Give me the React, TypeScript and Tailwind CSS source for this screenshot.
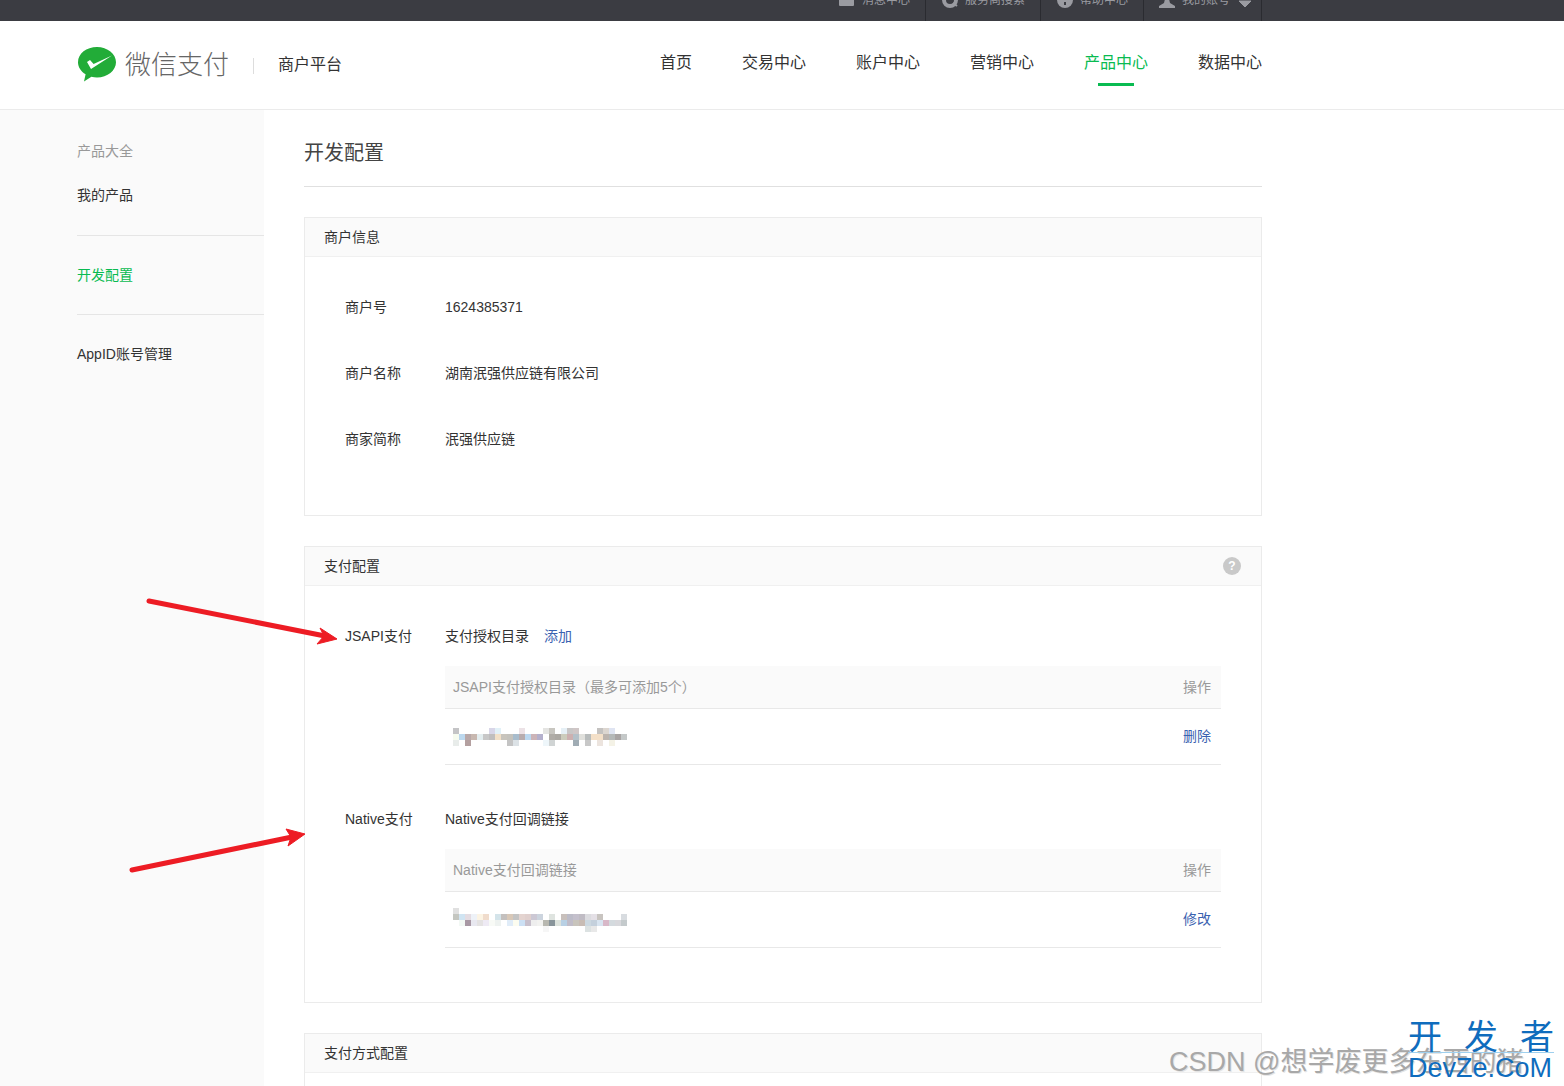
const FONT = '[font-family:"Liberation_Sans","Noto_Sans_CJK_SC",sans-serif]';

const NAV = ['首页', '交易中心', '账户中心', '营销中心', '产品中心', '数据中心'];

// 打码区域的色块，每块 6px
const MOSAIC_A = [
  ['#c4c4c6', '', '', '', '', '', '#d8d6e8', '#e2f1f8', '', '', '', '#ece2e6', '', '', '', '#e4e4e2', '#c8c6c0', '', '#e6f0f6', '#c8c6c6', '#cfc6c6', '', '', '', '#c4c2c0', '#dcd6d0', '#dfe4f2', ''],
  ['#f6fbef', '#bcd8ee', '#b8a8a8', '#c8b8b0', '#e4eef0', '#c8c8c8', '#c0bebe', '#f2e0c8', '#c8c4bc', '#c4c2bc', '#a8bccc', '#b8acae', '#bcd8f0', '#ccb4b8', '#b4b0cc', '', '#b0aca6', '#aca8a2', '#ccccbc', '#ccb0b0', '#b4c0c8', '#e0e0dc', '#b8bcbc', '#f4e0c8', '#f4e0c8', '#bcb4ae', '#b4b8b8', '#a8a4a4', '#c4c8c8'],
  ['#e8ecea', '', '#b4a0a0', '', '', '', '', '', '', '#c4c4c4', '#dce2e6', '', '', '', '', '#eef6fa', '#d0d4d4', '', '', '', '#a0acb4', '', '#c8c8c8', '', '#ece4de', '', '#f4f2e6', '', ''],
];

const MOSAIC_B = [
  ['#e0e0e0', '', '', '', '', '', '', '', '', '', '', '', '', '', '', '', '', '', '', '', '', '', '', '', '', '', '', '', ''],
  ['#c4c6c0', '#d0e4f2', '#e4dce2', '#eef2f8', '#fcf4e4', '#f0dccc', '', '#d4e4ea', '#c4c0be', '#d8c8b8', '#c4c4c4', '#e4d4d0', '#e0d0ce', '#ccc8d4', '#ccd4de', '', '#dfe4e0', '', '#c8c0bc', '#bcbcc8', '#c4c0cc', '#c0bcc4', '#dcdce0', '#e4e0e6', '#c8c4c0', '', '', '', '#d8dce0'],
  ['', '#f2f8f4', '#a898a4', '#e8e8f0', '#e4e2e2', '#eeeaf4', '#f8faf6', '#eef2f0', '', '#e0ecf8', '#fcfcf0', '#cce0f4', '#c8c0cc', '#eeeeee', '#f2f2f0', '#b8b8b0', '#88949a', '#dce2dc', '#b8d0e4', '#c0bcc8', '#c8c4bc', '#c8bcb4', '#ccd8e0', '#c4d0dc', '#d8e4f0', '#d8b8c8', '#d4dade', '#d8d8dc', '#c4cacc'],
  ['', '', '', '', '', '', '', '', '', '', '', '', '', '', '', '#f6f6f6', '', '', '', '', '', '', '#dce2e2', '#e8e8e8', '', '', '', '', ''],
];

function Mosaic({ rows }: { rows: string[][] }) {
  return (
    <svg width="174" height={rows.length * 6} className="block">
      {rows.map((row, y) =>
        row.map((c, x) => (c ? <rect key={`${x}-${y}`} x={x * 6} y={y * 6} width="6" height="6" fill={c} /> : null)),
      )}
    </svg>
  );
}

function Card({ title, help, children }: { title: string; help?: boolean; children?: React.ReactNode }) {
  return (
    <section className="border border-[#ebebeb] mt-[30px] first:mt-0">
      <div className="h-[39px] flex items-center justify-between pl-[19px] pr-[20px] bg-[#fafafa] border-b border-[#f0f0f0] text-sm text-[#333]">
        <span>{title}</span>
        {help && (
          <span className="w-[18px] h-[18px] rounded-full bg-[#c9c9c9] text-white text-xs font-bold flex items-center justify-center">?</span>
        )}
      </div>
      {children}
    </section>
  );
}

function InfoRow({ label, value }: { label: string; value: string }) {
  return (
    <div className="h-[66px] flex items-center text-sm text-[#333]">
      <span className="w-[100px]">{label}</span>
      <span>{value}</span>
    </div>
  );
}

function ConfigTable({ head, rows, action }: { head: string; rows: string[][]; action: string }) {
  return (
    <div className="text-sm">
      <div className="h-[43px] flex items-center justify-between px-2 pr-[10px] bg-[#fafafa] border-b border-[#e8e8e8] text-[#999]">
        <span>{head}</span>
        <span>操作</span>
      </div>
      <div className="h-[56px] flex items-center justify-between px-2 pr-[10px] border-b border-[#e8e8e8]">
        <Mosaic rows={rows} />
        <span className="mb-[2px] text-[#3a62b0]">{action}</span>
      </div>
    </div>
  );
}

export default function App() {
  return (
    <div className={`relative h-[1086px] overflow-hidden bg-white ${FONT}`}>
      {/* 顶部黑条，文字被截掉一半 */}
      <div className="h-[21px] bg-[#3b3c42] overflow-hidden flex justify-end pr-[302px] text-xs text-[#9a9ba1]">
        <div className="flex items-center h-[21px] pl-[9px] pr-[15px] gap-[7px]">
          <div className="flex items-center gap-[8px] -translate-y-[11px]">
            <svg width="15" height="14" viewBox="0 0 15 14"><rect y="1" width="15" height="12" rx="1" fill="#9a9ba1" /></svg>
            消息中心
          </div>
        </div>
        <div className="flex items-center h-[21px] pl-[16px] pr-[15px] border-l border-[#2a2b30]">
          <div className="flex items-center gap-[7px] -translate-y-[11px]">
            <svg width="16" height="16" viewBox="0 0 16 16"><circle cx="8" cy="8" r="6" fill="none" stroke="#9a9ba1" strokeWidth="4" /><path d="M11 11l4 3" stroke="#9a9ba1" strokeWidth="2" /></svg>
            服务商搜索
          </div>
        </div>
        <div className="flex items-center h-[21px] pl-[16px] pr-[15px] border-l border-[#2a2b30]">
          <div className="flex items-center gap-[7px] -translate-y-[11px]">
            <svg width="16" height="16" viewBox="0 0 16 16"><circle cx="8" cy="8" r="8" fill="#9a9ba1" /><rect x="7" y="10" width="2" height="3" fill="#3b3c42" /></svg>
            帮助中心
          </div>
        </div>
        <div className="flex items-center h-[21px] pl-[15px] pr-[9px] border-x border-[#2a2b30]">
          <div className="flex items-center gap-[7px] -translate-y-[11px]">
            <svg width="16" height="16" viewBox="0 0 16 16"><circle cx="8" cy="4" r="4" fill="#9a9ba1" /><path d="M6 7h4l1 4 5 3v2H0v-2l5-3z" fill="#9a9ba1" /></svg>
            我的账号
            <svg width="14" height="16" viewBox="0 0 14 16" className="ml-[1px]"><path d="M1 9h12l-6 6z" fill="#9a9ba1" stroke="#9a9ba1" strokeLinejoin="round" /></svg>
          </div>
        </div>
      </div>

      <header className="h-[89px] border-b border-[#ebebeb] flex items-center pl-[78px] pr-[302px]">
        <svg width="38" height="35" viewBox="0 0 38 35" className="mt-[-1px]">
          <path d="M19 0C8.5 0 0 6.6 0 15.2c0 5 3 9.3 7.6 12l-1.6 7.2 7.4-4.6c1.8.4 3.7.6 5.6.6 10.5 0 19-7 19-15.2S29.5 0 19 0z" fill="#22ac38" />
          <path d="M9 15l3-2 3.6 4L34 8.5 13 22z" fill="#fff" />
        </svg>
        <span className="ml-[9px] text-[26px] leading-none text-[#666] font-light">微信支付</span>
        <span className="ml-[24px] w-px h-4 bg-[#ddd] mt-[2px]" />
        <span className="ml-[24px] text-base text-[#333] -mt-[1px]">商户平台</span>
        <nav className="ml-auto flex gap-[50px] text-base h-full">
          {NAV.map((item) => {
            const active = item === '产品中心';
            return (
              <div key={item} className={`relative flex items-center pb-[5px] ${active ? 'text-[#09bb51]' : 'text-[#333]'}`}>
                {item}
                {active && <span className="absolute left-[14px] top-[62px] w-9 h-[3px] bg-[#09bb51]" />}
              </div>
            );
          })}
        </nav>
      </header>

      <div className="flex h-[976px]">
        <aside className="w-[264px] bg-[#fafafa] pl-[77px] text-sm text-[#333]">
          <div className="pt-[31px] text-[#999] leading-5">产品大全</div>
          <div className="mt-6 leading-5">我的产品</div>
          <div className="mt-[30px] border-t border-[#e5e5e5]" />
          <div className="mt-[29px] leading-5 text-[#09bb51]">开发配置</div>
          <div className="mt-[29px] border-t border-[#e5e5e5]" />
          <div className="mt-[29px] leading-5">AppID账号管理</div>
        </aside>

        <main className="w-[958px] ml-[40px]">
          <h1 className="h-[77px] border-b border-[#e0e0e0] pt-[28px] text-xl leading-[30px] text-[#444]">开发配置</h1>
          <div className="mt-[30px]">
            <Card title="商户信息">
              <div className="h-[258px] pl-[40px] pt-[17px]">
                <InfoRow label="商户号" value="1624385371" />
                <InfoRow label="商户名称" value="湖南泯强供应链有限公司" />
                <InfoRow label="商家简称" value="泯强供应链" />
              </div>
            </Card>
            <Card title="支付配置" help>
              <div className="h-[416px] pl-[40px] pr-[40px] pt-[40px] text-sm text-[#333]">
                <div className="flex">
                  <span className="w-[100px] leading-5">JSAPI支付</span>
                  <div className="flex-1">
                    <div className="leading-5">支付授权目录<span className="ml-[15px] text-[#3a62b0]">添加</span></div>
                    <div className="mt-[20px]"><ConfigTable head="JSAPI支付授权目录（最多可添加5个）" rows={MOSAIC_A} action="删除" /></div>
                  </div>
                </div>
                <div className="flex mt-[44px]">
                  <span className="w-[100px] leading-5">Native支付</span>
                  <div className="flex-1">
                    <div className="leading-5">Native支付回调链接</div>
                    <div className="mt-[20px]"><ConfigTable head="Native支付回调链接" rows={MOSAIC_B} action="修改" /></div>
                  </div>
                </div>
              </div>
            </Card>
            <Card title="支付方式配置"><div className="h-20" /></Card>
          </div>
        </main>
      </div>

      {/* 截图上的红色箭头 */}
      <svg className="absolute left-0 top-0 pointer-events-none" width="400" height="900">
        <path d="M149 601L325 636" stroke="#ed1c24" strokeWidth="5" strokeLinecap="round" />
        <path d="M337 639L320 628L324 636L317 644z" fill="#ed1c24" stroke="#ed1c24" strokeWidth="1" strokeLinejoin="round" />
        <path d="M132 870L292 837" stroke="#ed1c24" strokeWidth="5" strokeLinecap="round" />
        <path d="M305 834L286 829L291 837L288 846z" fill="#ed1c24" stroke="#ed1c24" strokeWidth="1" strokeLinejoin="round" />
      </svg>

      {/* 水印 */}
      <div className="absolute left-[1169px] top-[1044px] text-[27px] leading-9 whitespace-nowrap text-[#a8a8a8] [text-shadow:1px_1px_0_#e4e4e4]">CSDN @想学废更多东西的猪</div>
      <div className="absolute left-[1408px] top-[1017px] w-[146px] text-[#0f6cbd]">
        <div className="flex justify-between text-[34px] leading-[40px]">
          <span>开</span><span>发</span><span>者</span>
        </div>
        <div className="text-[27px] leading-[30px] border-t border-[#9fd0ee] -mt-[5px] whitespace-nowrap">DevZe.CoM</div>
      </div>
    </div>
  );
}
